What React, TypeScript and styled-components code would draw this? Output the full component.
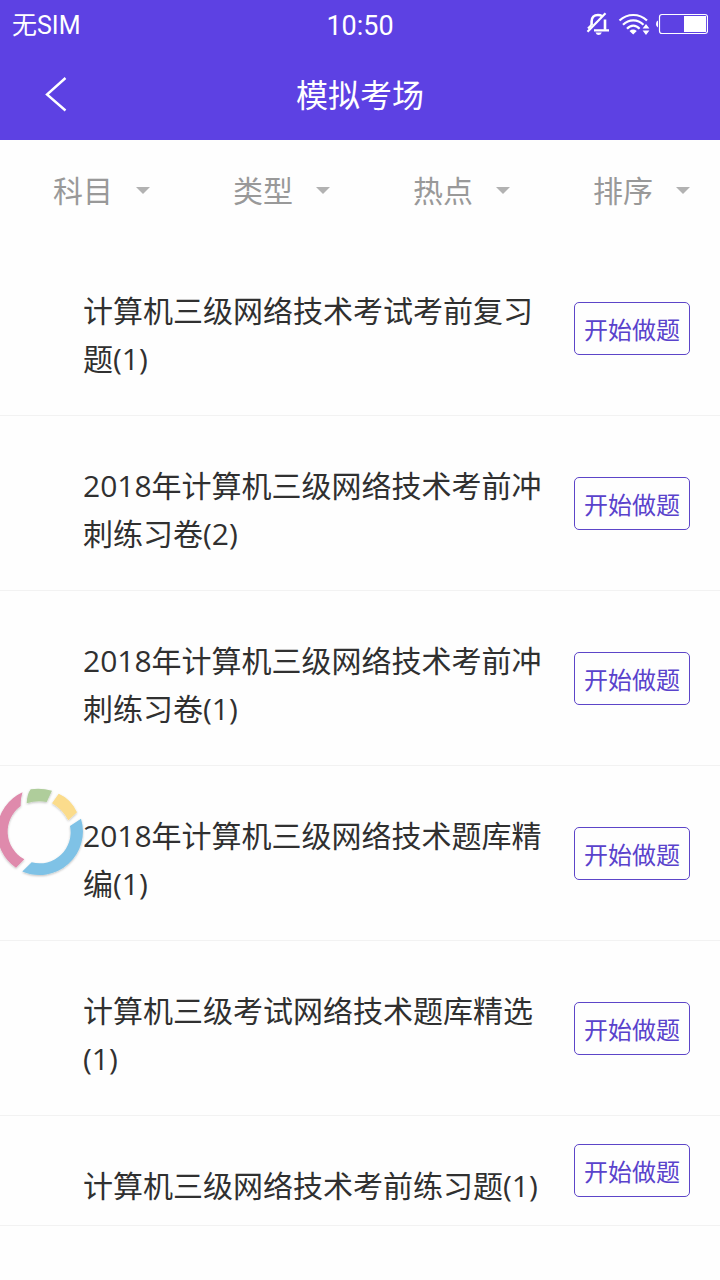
import React from "react";
import styled, { createGlobalStyle } from "styled-components";

const GlobalStyle = createGlobalStyle`
  * { box-sizing: border-box; }
  body {
    margin: 0;
    background: #fefefe;
    color: #303030;
    font-family: "Open Sans", "Noto Sans CJK SC", sans-serif;
  }
  button, select { font: inherit; }
`;

const Screen = styled.div`
  position: relative;
  min-height: 100vh;
`;

const Header = styled.header`
  background: #5d41e3;
  color: #fff;
`;

const StatusBar = styled.div`
  display: grid;
  grid-template-columns: 1fr auto 1fr;
  align-items: start;
  height: 50px;
  padding: 0 12px;
  font-family: Roboto, "Noto Sans CJK SC", sans-serif;
  font-size: 25px;
  line-height: 52px;
`;

const Clock = styled.time`
  font-size: 27px;
`;

const StatusIcons = styled.div`
  display: flex;
  justify-content: flex-end;
  height: 50px;
`;

const NavBar = styled.div`
  display: grid;
  grid-template-columns: 1fr auto 1fr;
  align-items: center;
  height: 90px;
  padding: 0 36px;
`;

const BackButton = styled.button`
  display: flex;
  justify-self: start;
  padding: 0;
  border: 0;
  background: none;
  color: inherit;
`;

const PageTitle = styled.h1`
  margin: 0;
  font-size: 32px;
  font-weight: 400;
  line-height: 48px;
`;

const Filters = styled.div`
  display: grid;
  grid-template-columns: repeat(4, 1fr);
  height: 101px;
`;

const FilterLabel = styled.label`
  display: flex;
  align-items: center;
  justify-content: flex-end;
  gap: 23px;
  padding-right: 30px;
  color: #999;
`;

const FilterSelect = styled.select`
  appearance: none;
  width: 60px;
  height: 48px;
  padding: 0;
  border: 0;
  background: none;
  color: inherit;
  font-size: 30px;
  line-height: 48px;
`;

const List = styled.ul`
  margin: 0;
  padding: 0;
  list-style: none;
`;

const Row = styled.li`
  display: flex;
  align-items: center;
  justify-content: space-between;
  padding: 0 30px 0 83px;
  border-bottom: 1px solid #f2f2f2;
`;

const RowTitle = styled.h2<{ $compact?: boolean }>`
  flex: 1;
  margin: 0;
  padding: ${(p) => (p.$compact ? "46px 0 15px" : "46px 0 32px")};
  font-size: 30px;
  font-weight: 400;
  line-height: 48px;
`;

const StartButton = styled.button`
  flex: none;
  width: 116px;
  height: 53px;
  margin-left: 24px;
  padding: 0;
  border: 1px solid #5d45c8;
  border-radius: 5px;
  background: #fefefe;
  color: #5a42cc;
  font-size: 24px;
`;

const FloatingRing = styled.button`
  position: absolute;
  top: 785px;
  left: 0;
  display: flex;
  padding: 0;
  border: 0;
  background: none;
`;

const filters = ["科目", "类型", "热点", "排序"];

const papers = [
  { title: "计算机三级网络技术考试考前复习题(1)" },
  { title: "2018年计算机三级网络技术考前冲刺练习卷(2)" },
  { title: "2018年计算机三级网络技术考前冲刺练习卷(1)" },
  { title: "2018年计算机三级网络技术题库精编(1)" },
  { title: "计算机三级考试网络技术题库精选(1)" },
  { title: "计算机三级网络技术考前练习题(1)", compact: true },
];

function StatusGlyphs() {
  return (
    <svg width="124" height="50" viewBox="584 0 124 50" fill="none" stroke="#fff" aria-hidden="true">
      <path d="M605.5 13.2L587.5 31.8" strokeWidth="2.2" />
      <path d="M591.6 25V21.5C591.6 17 594 15 598 15C599.8 15 601 15.4 602 16" strokeWidth="2.6" />
      <path d="M605 19.5V29.8" strokeWidth="2.6" />
      <path d="M594 30.3H609M588 28.5L591.5 25" strokeWidth="2.2" />
      <path d="M595.5 32.5H601.8Q600.8 35 598.6 35Q596.5 35 595.5 32.5Z" fill="#fff" stroke="none" />
      <path d="M619.5 20.5Q625.5 15 633.3 15T647 20.5M623 24.8Q627.5 20.3 633.3 20.3T643.5 24.8M627 28.8Q629.8 25.6 633.3 25.6T639.6 28.8" strokeWidth="2.2" />
      <path d="M629.5 31Q633 28.2 636.8 31L633.2 34.4ZM642.6 28.6H649.4L646 24ZM642.6 30.6H649.4L646 35Z" fill="#fff" stroke="none" />
      <rect x="659.5" y="14.5" width="48" height="19" rx="2.5" strokeWidth="1.2" />
      <path d="M684 16H706V32H684Z" fill="#fff" stroke="none" />
      <path d="M658 20.5V27.5Q656 27 656 24T658 20.5Z" fill="#fff" stroke="none" />
    </svg>
  );
}

function Caret() {
  return (
    <svg width="14" height="7" viewBox="0 0 14 7" aria-hidden="true">
      <path d="M0 0H14L7 7Z" fill="#b2b2b2" />
    </svg>
  );
}

function Ring() {
  return (
    <svg width="90" height="98" viewBox="0 0 90 98" aria-hidden="true">
      <defs>
        <filter id="ring-shadow" x="-20%" y="-20%" width="140%" height="140%">
          <feDropShadow dx="0" dy="1" stdDeviation="1.2" floodColor="#000" floodOpacity="0.25" />
        </filter>
      </defs>
      <g filter="url(#ring-shadow)">
        <path d="M22.5 7.3A43.5 43.5 0 0 0 16 82.7L24.3 74.3A31.5 31.5 0 0 1 20.7 21Q20.5 13 22.5 7.3Z" fill="#df8aac" />
        <path d="M30.7 4.3Q41 2.6 52 5.7L46.7 17Q37 14.8 26.7 18.3Q27 9 30.7 4.3Z" fill="#afcd9b" />
        <path d="M58.7 8.7Q71 14 77 27.3L68.3 35.3Q62.5 24 52 18.3Z" fill="#fbdc8c" />
        <path d="M81 33.7A43.5 43.5 0 0 1 22.3 86.5L31.7 77.3A31 31 0 0 0 70 41Z" fill="#7fc2e6" />
      </g>
    </svg>
  );
}

export default function App() {
  return (
    <Screen>
      <GlobalStyle />
      <Header>
        <StatusBar>
          <span>无SIM</span>
          <Clock>10:50</Clock>
          <StatusIcons>
            <StatusGlyphs />
          </StatusIcons>
        </StatusBar>
        <NavBar>
          <BackButton type="button" aria-label="返回">
            <svg width="40" height="40" viewBox="0 0 40 40" fill="none" stroke="#fff" strokeWidth="2.4" aria-hidden="true">
              <path d="M29.5 3L11 19.5L29.5 35.5" />
            </svg>
          </BackButton>
          <PageTitle>模拟考场</PageTitle>
        </NavBar>
      </Header>
      <main>
        <Filters>
          {filters.map((name) => (
            <FilterLabel key={name}>
              <FilterSelect aria-label={name}>
                <option>{name}</option>
              </FilterSelect>
              <Caret />
            </FilterLabel>
          ))}
        </Filters>
        <List>
          {papers.map((paper) => (
            <Row key={paper.title}>
              <RowTitle $compact={paper.compact}>{paper.title}</RowTitle>
              <StartButton type="button">开始做题</StartButton>
            </Row>
          ))}
        </List>
      </main>
      <FloatingRing type="button" aria-label="悬浮菜单">
        <Ring />
      </FloatingRing>
    </Screen>
  );
}
